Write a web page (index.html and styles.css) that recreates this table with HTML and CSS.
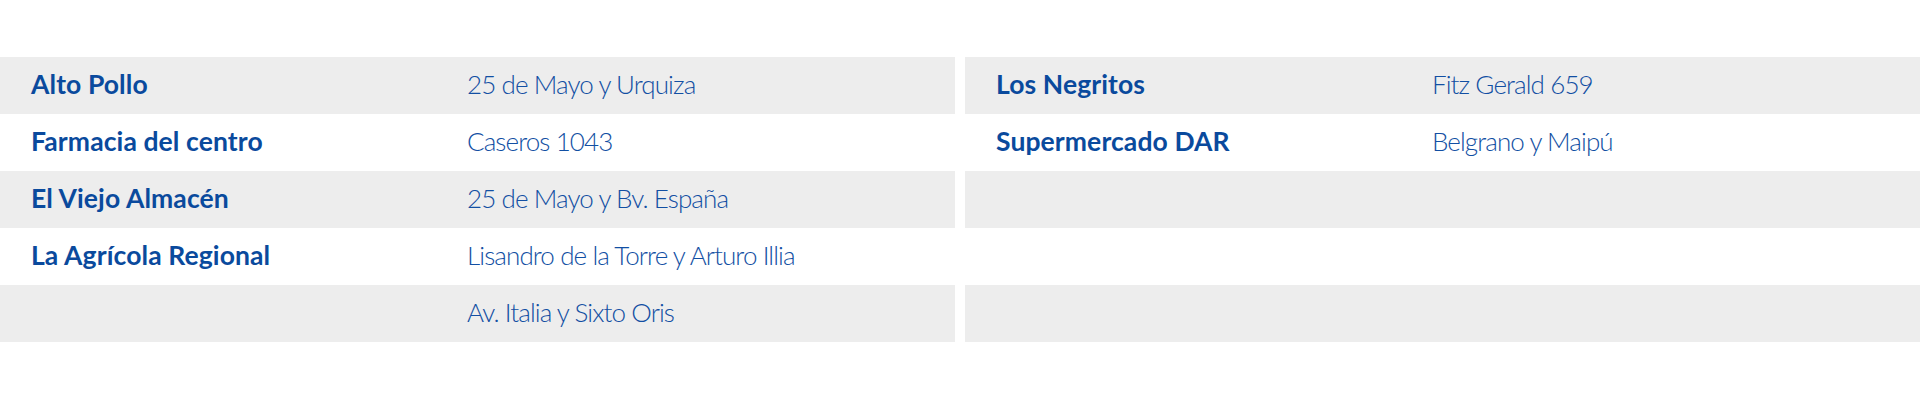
FILE: index.html
```html
<!DOCTYPE html>
<html lang="es">
<head>
<meta charset="utf-8">
<title>Puntos de venta</title>
<link rel="stylesheet" href="styles.css">
</head>
<body>
<div class="wrap">
  <div class="table">
    <div class="row"><span class="name">Alto Pollo</span><span class="addr">25 de Mayo y Urquiza</span></div>
    <div class="row"><span class="name">Farmacia del centro</span><span class="addr">Caseros 1043</span></div>
    <div class="row"><span class="name">El Viejo Almacén</span><span class="addr">25 de Mayo y Bv. España</span></div>
    <div class="row"><span class="name">La Agrícola Regional</span><span class="addr">Lisandro de la Torre y Arturo Illia</span></div>
    <div class="row"><span class="name"></span><span class="addr">Av. Italia y Sixto Oris</span></div>
  </div>
  <div class="table">
    <div class="row"><span class="name">Los Negritos</span><span class="addr">Fitz Gerald 659</span></div>
    <div class="row"><span class="name">Supermercado DAR</span><span class="addr">Belgrano y Maipú</span></div>
    <div class="row"><span class="name"></span><span class="addr"></span></div>
    <div class="row"><span class="name"></span><span class="addr"></span></div>
    <div class="row"><span class="name"></span><span class="addr"></span></div>
  </div>
</div>
</body>
</html>
```

FILE: styles.css
```css
html, body {
  margin: 0;
  padding: 0;
  background: #ffffff;
}
body {
  font-family: "Lato", "Open Sans", sans-serif;
  color: #0b4a9e;
}
.wrap {
  display: grid;
  grid-template-columns: 1fr 1fr;
  column-gap: 10px;
  padding-top: 57px;
}
.table {
  display: flex;
  flex-direction: column;
}
.row {
  display: grid;
  grid-template-columns: 436px 1fr;
  align-items: center;
  height: 57px;
  padding-left: 31px;
  padding-bottom: 3px;
  box-sizing: border-box;
}
.row:nth-child(odd) {
  background: #ededed;
}
.name {
  font-weight: 700;
  font-size: 26.5px;
  letter-spacing: 0.1px;
  color: #0a4a9d;
}
.addr {
  font-weight: 300;
  font-size: 26px;
  letter-spacing: -0.9px;
  color: #124fa3;
}
```
